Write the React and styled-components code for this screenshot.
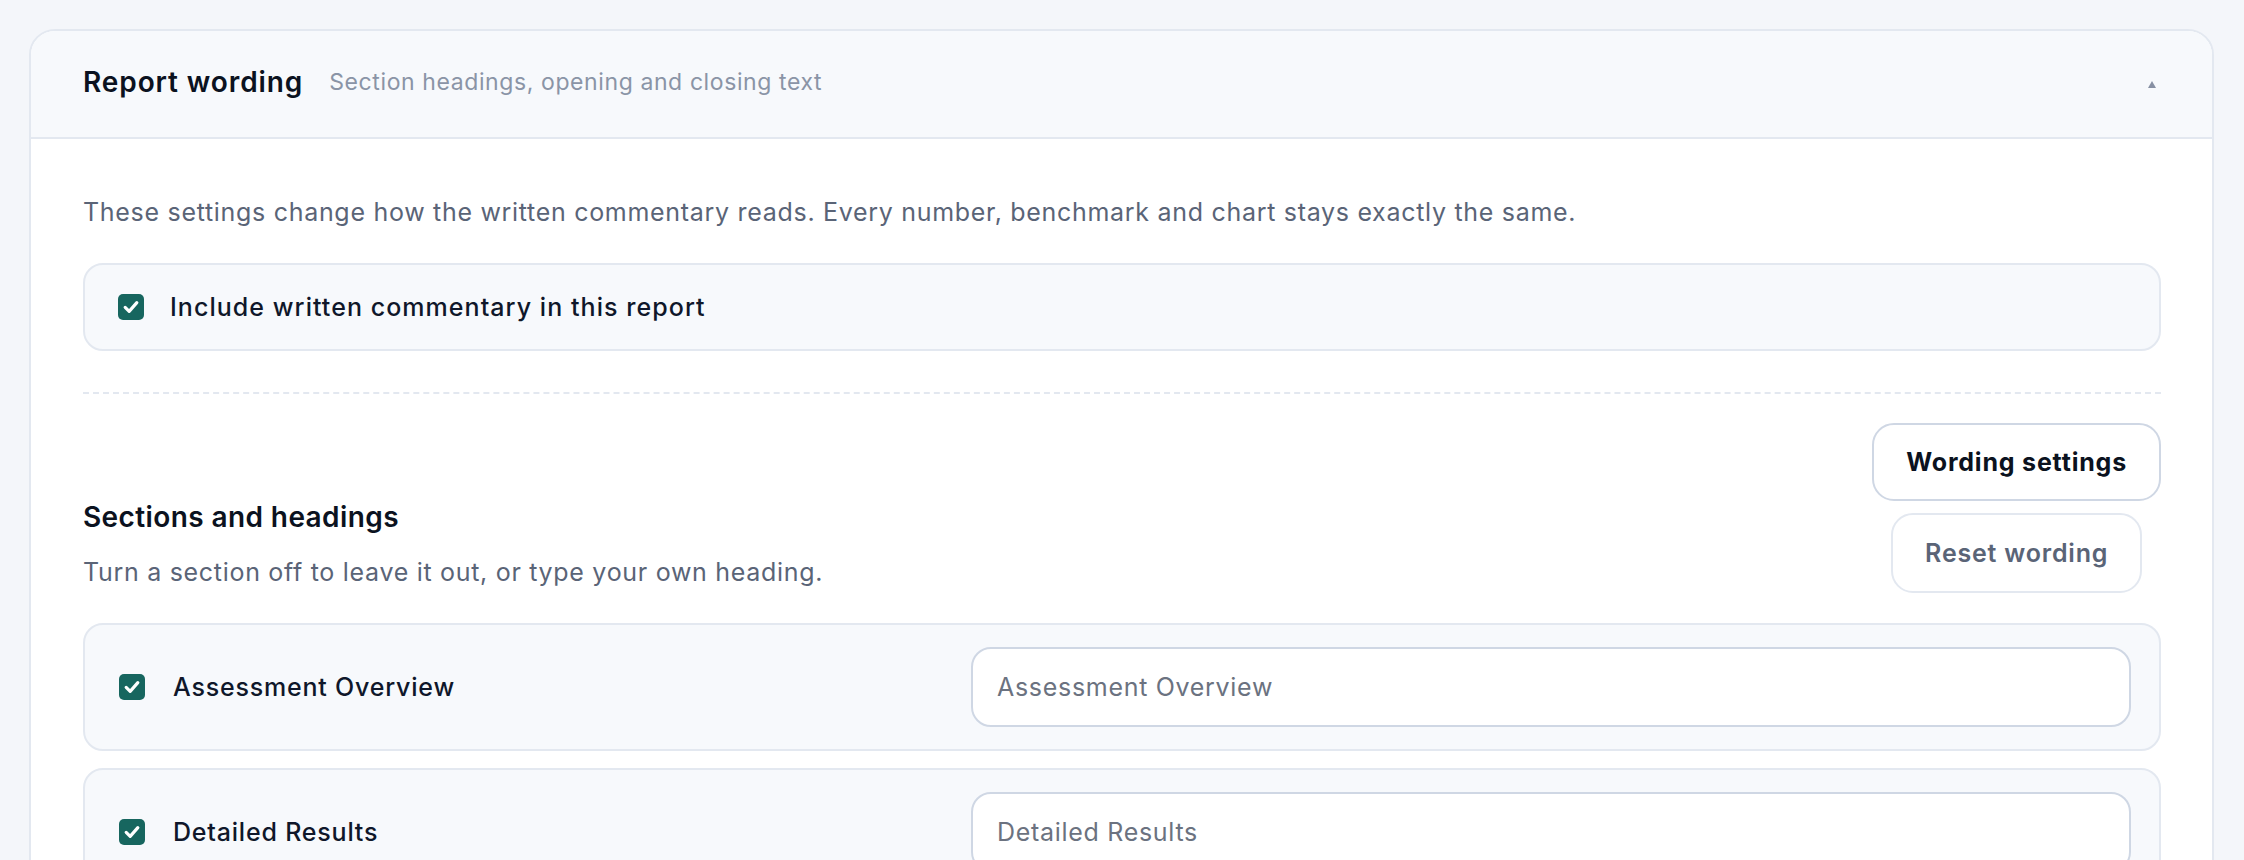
import React from "react";
import styled, { createGlobalStyle } from "styled-components";

const GlobalStyle = createGlobalStyle`
  body {
    margin: 0;
    background: #f4f6fa;
    font-family: Inter, "Noto Sans", "Liberation Sans", sans-serif;
    color: #0f172a;
  }
`;

const sections = [
  { id: "overview", label: "Assessment Overview", enabled: true },
  { id: "results", label: "Detailed Results", enabled: true },
];

export default function App() {
  return (
    <>
      <GlobalStyle />
      <Page>
        <Card>
          <Header>
            <Title>Report wording</Title>
            <Subtitle>Section headings, opening and closing text</Subtitle>
            <Caret />
          </Header>
          <Body>
            <Intro>
              These settings change how the written commentary reads. Every
              number, benchmark and chart stays exactly the same.
            </Intro>
            <ToggleRow>
              <Checkbox checked />
              <ToggleLabel>Include written commentary in this report</ToggleLabel>
            </ToggleRow>
            <Divider />
            <SectionsHead>
              <div>
                <SectionsTitle>Sections and headings</SectionsTitle>
                <SectionsHint>
                  Turn a section off to leave it out, or type your own heading.
                </SectionsHint>
              </div>
              <ButtonStack>
                <Button $primary>Wording settings</Button>
                <Button>Reset wording</Button>
              </ButtonStack>
            </SectionsHead>
            <SectionList>
              {sections.map((s) => (
                <SectionRow key={s.id}>
                  <RowLabel>
                    <Checkbox checked={s.enabled} />
                    <span>{s.label}</span>
                  </RowLabel>
                  <HeadingInput placeholder={s.label} />
                </SectionRow>
              ))}
            </SectionList>
          </Body>
        </Card>
      </Page>
    </>
  );
}

function Checkbox({ checked }) {
  return (
    <Box $checked={checked}>
      {checked && (
        <svg width="20" height="20" viewBox="0 0 24 24" fill="none">
          <polyline
            points="5 12.5 9.8 17.2 19 6.8"
            stroke="#fff"
            strokeWidth="3.8"
            strokeLinecap="round"
            strokeLinejoin="round"
          />
        </svg>
      )}
    </Box>
  );
}

const Page = styled.div`
  padding: 29px 30px 0 29px;
`;

const Card = styled.div`
  border: 2px solid #e3e8f0;
  border-radius: 26px;
  background: #fff;
  overflow: hidden;
`;

const Header = styled.div`
  display: flex;
  align-items: center;
  gap: 26px;
  height: 102px;
  padding: 0 56px 4px 52px;
  background: #f7f9fc;
  border-bottom: 2px solid #e3e8f0;
`;

const Title = styled.h2`
  margin: 0;
  font-size: 28px;
  font-weight: 600;
  letter-spacing: 0.9px;
  color: #0b1220;
`;

const Subtitle = styled.span`
  flex: 1;
  font-size: 23px;
  letter-spacing: 0.6px;
  color: #8a94a6;
`;

const Caret = styled.span`
  width: 0;
  height: 0;
  margin-top: 4px;
  border-left: 4px solid transparent;
  border-right: 4px solid transparent;
  border-bottom: 7px solid #8790a3;
`;

const Body = styled.div`
  padding: 55px 51px 0 52px;
`;

const Intro = styled.p`
  margin: 0;
  font-size: 25px;
  line-height: 36px;
  letter-spacing: 0.7px;
  color: #5a6477;
`;

const ToggleRow = styled.label`
  display: flex;
  align-items: center;
  gap: 26px;
  height: 84px;
  margin-top: 33px;
  padding: 0 33px;
  background: #f7f9fc;
  border: 2px solid #e3e8f0;
  border-radius: 20px;
`;

const ToggleLabel = styled.span`
  font-size: 25px;
  font-weight: 500;
  letter-spacing: 1.05px;
  color: #0f172a;
`;

const Box = styled.span`
  flex: none;
  display: flex;
  align-items: center;
  justify-content: center;
  width: 26px;
  height: 26px;
  border-radius: 5px;
  background: ${(p) => (p.$checked ? "#17665f" : "#fff")};
  border: ${(p) => (p.$checked ? "none" : "2px solid #cbd5e1")};
  box-sizing: border-box;
`;

const Divider = styled.hr`
  margin: 41px 0 0;
  border: none;
  border-top: 2px dashed #e3e8f0;
`;

const SectionsHead = styled.div`
  display: flex;
  justify-content: space-between;
  align-items: flex-end;
  padding-top: 29px;
`;

const SectionsTitle = styled.h3`
  margin: 0;
  font-size: 28px;
  line-height: 35px;
  font-weight: 600;
  letter-spacing: 0.4px;
  color: #0b1220;
`;

const SectionsHint = styled.p`
  margin: 19px 0 3px;
  font-size: 25px;
  line-height: 36px;
  letter-spacing: 0.7px;
  color: #5a6477;
`;

const ButtonStack = styled.div`
  display: flex;
  flex-direction: column;
  align-items: center;
  gap: 12px;
`;

const Button = styled.button`
  height: ${(p) => (p.$primary ? "78px" : "80px")};
  padding: 0 32px;
  font-family: inherit;
  font-size: 25px;
  letter-spacing: 0.8px;
  font-weight: ${(p) => (p.$primary ? 700 : 600)};
  color: ${(p) => (p.$primary ? "#0b1220" : "#5a6477")};
  background: #fff;
  border: 2px solid ${(p) => (p.$primary ? "#cfd7e4" : "#e3e8f0")};
  border-radius: 22px;
  cursor: pointer;
`;

const SectionList = styled.div`
  display: flex;
  flex-direction: column;
  gap: 17px;
  margin-top: 30px;
`;

const SectionRow = styled.div`
  display: grid;
  grid-template-columns: 1fr 1160px;
  align-items: center;
  padding: 22px 28px 22px 34px;
  background: #f7f9fc;
  border: 2px solid #e3e8f0;
  border-radius: 20px;
`;

const RowLabel = styled.label`
  display: flex;
  align-items: center;
  gap: 28px;
  font-size: 25px;
  font-weight: 500;
  letter-spacing: 0.8px;
  color: #0f172a;
`;

const HeadingInput = styled.input`
  height: 80px;
  box-sizing: border-box;
  padding: 0 24px;
  font-family: inherit;
  font-size: 25px;
  letter-spacing: 0.7px;
  color: #0f172a;
  background: #fff;
  border: 2px solid #cfd7e4;
  border-radius: 20px;
  outline: none;

  &::placeholder {
    color: #6b7280;
  }
`;
